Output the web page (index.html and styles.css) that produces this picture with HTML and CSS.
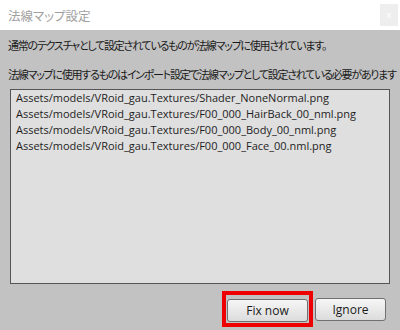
FILE: index.html
```html
<!DOCTYPE html>
<html lang="ja">
<head>
    <meta charset="UTF-8">
    <meta name="viewport" content="width=device-width, initial-scale=1.0">
    <title>法線マップ設定</title>
    <link rel="stylesheet" href="styles.css">
</head>
<body>
    <div class="dialog">
        <!-- タイトルバー -->
        <header class="title-bar">
            <h1>法線マップ設定</h1>
            <button class="close-btn">x</button>
        </header>

        <div class="content">
            <p class="message">通常のテクスチャとして設定されているものが法線マップに使用されています。</p>
            <p class="message">法線マップに使用するものはインポート設定で法線マップとして設定されている必要があります</p>

            <!-- 対象テクスチャ一覧 -->
            <ul class="file-list">
                <li>Assets/models/VRoid_gau.Textures/Shader_NoneNormal.png</li>
                <li>Assets/models/VRoid_gau.Textures/F00_000_HairBack_00_nml.png</li>
                <li>Assets/models/VRoid_gau.Textures/F00_000_Body_00_nml.png</li>
                <li>Assets/models/VRoid_gau.Textures/F00_000_Face_00.nml.png</li>
            </ul>

            <div class="actions">
                <div class="highlight">
                    <button class="btn btn-fix">Fix now</button>
                </div>
                <button class="btn btn-ignore">Ignore</button>
            </div>
        </div>
    </div>
</body>
</html>
```

FILE: styles.css
```css
body {
    margin: 0;
    width: 400px;
    height: 330px;
    overflow: hidden;
    font-family: "Noto Sans CJK JP", "Noto Sans", sans-serif;
}

.dialog {
    display: flex;
    flex-direction: column;
    height: 330px;
    background-color: #c2c2c2;
}

.title-bar {
    height: 30px;
    background-color: #ffffff;
    display: flex;
    align-items: center;
    justify-content: space-between;
    padding: 0 2px 0 8px;
}

.title-bar h1 {
    margin: 0;
    font-size: 12.5px;
    font-weight: normal;
    color: #a0a0a0;
    font-feature-settings: "palt";
}

.close-btn {
    width: 18px;
    height: 22px;
    border: none;
    background-color: #eeeeee;
    color: #ffffff;
    font-size: 9px;
    padding: 0;
}

.content {
    flex: 1;
    display: flex;
    flex-direction: column;
    padding: 1px 14px 0 8px;
}

.message {
    margin: 0;
    height: 29px;
    line-height: 29px;
    font-size: 11px;
    color: #1a1a1a;
    font-feature-settings: "palt";
    letter-spacing: -1.25px;
    white-space: nowrap;
}

/* テクスチャのリスト */
.file-list {
    list-style: none;
    margin: 0 -4px 0 2px;
    padding: 0 0 0 5px;
    height: 193px;
    background-color: #dfdfdf;
    border: 1px solid #555555;
    font-family: "Open Sans", "Noto Sans", sans-serif;
    font-size: 11px;
    color: #1e1e1e;
}

.file-list li {
    height: 16px;
    line-height: 15px;
}

.actions {
    display: flex;
    justify-content: flex-end;
    align-items: center;
    gap: 2px;
    padding-top: 7px;
}

/* 赤い枠 */
.highlight {
    border: 4px solid #ee0000;
    padding: 1px;
}

.btn {
    height: 23px;
    border: 1px solid #707070;
    border-radius: 3px;
    background: linear-gradient(#f6f6f6, #dcdcdc);
    font-family: "Open Sans", "Noto Sans", sans-serif;
    font-size: 12px;
    color: #1a1a1a;
    padding: 0;
}

.btn-fix {
    width: 81px;
}

.btn-ignore {
    width: 71px;
}
```
